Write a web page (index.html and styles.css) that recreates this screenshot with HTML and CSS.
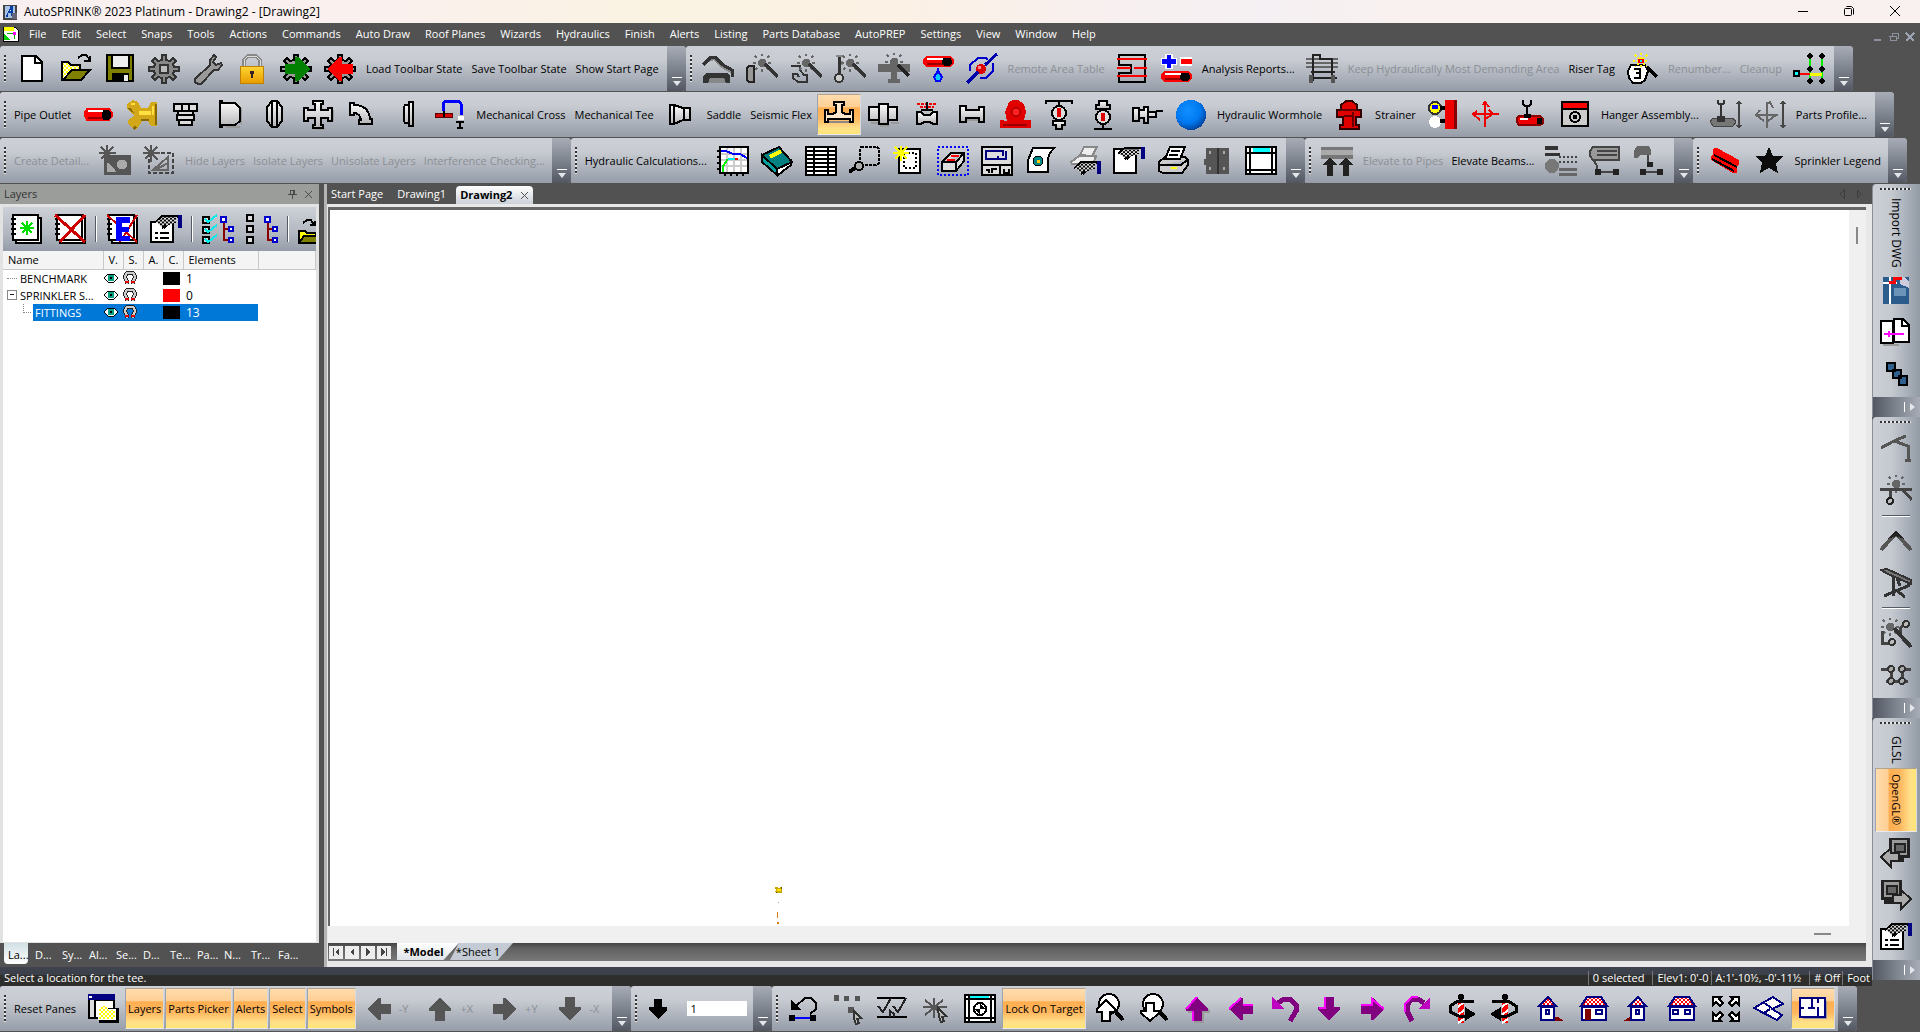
FILE: index.html
```html
<!DOCTYPE html>
<html lang="en">
<head>
<meta charset="utf-8">
<title>AutoSPRINK® 2023 Platinum - Drawing2 - [Drawing2]</title>
<link rel="stylesheet" href="styles.css">
</head>
<body>
<svg class="defs" aria-hidden="true">
<defs>
<pattern id="dither" width="4" height="4" patternUnits="userSpaceOnUse"><path fill="#fff" d="M0 0h4v4H0z"/><path fill="#ff0" d="M0 0h2v2H0zM2 2h2v2H2z"/></pattern>
<pattern id="tiles" width="4" height="4" patternUnits="userSpaceOnUse"><path fill="#fff" d="M0 0h4v4H0z"/><path fill="#f00" d="M0 0h2v2H0zM2 2h2v2H2z"/></pattern>
<pattern id="check" width="4" height="4" patternUnits="userSpaceOnUse"><path fill="#ddd" d="M0 0h4v4H0z"/><path fill="#000" d="M0 0h2v2H0zM2 2h2v2H2z"/></pattern>
<linearGradient id="steel" x2="0" y2="1"><stop stop-color="#fff"/><stop offset="1" stop-color="#b4b4b8"/></linearGradient>
<linearGradient id="gold" x2="0" y2="1"><stop stop-color="#ffd633"/><stop offset="1" stop-color="#e89c00"/></linearGradient>
<radialGradient id="ball" cx=".4" cy=".35" r=".7"><stop stop-color="#1090ff"/><stop offset=".6" stop-color="#0078f0"/><stop offset="1" stop-color="#003c90"/></radialGradient>
<symbol id="gearshape" viewBox="0 0 32 32"><path stroke-width="2" d="M14 2h4v5l4 1 3-3 3 3-3 3 1 3h5v4h-5l-1 3 3 3-3 3-3-3-4 1v5h-4v-5l-4-1-3 3-3-3 3-3-1-3H1v-4h5l1-3-3-3 3-3 3 3 4-1z"/></symbol>
<symbol id="pipe" viewBox="0 0 32 14" preserveAspectRatio="none"><path fill="#f00" d="M4 1h24l4 4v4l-4 4H4L1 9V5z"/><path fill="#fff" d="M5 3h16v2H5z"/><path fill="#900" d="M5 9h18v2H5z"/><path d="M22 3h6l2 3v3l-2 3h-6l-2-3V6z"/></symbol>
<symbol id="spark" viewBox="0 0 18 18"><path fill="#666" d="M7 5h4l2 2v4l-2 2H7l-2-2V7z"/><path stroke="#666" stroke-width="2" d="M9 0v2M9 15v3M0 9h3M15 9h3M2 2l2 2M16 2l-2 2M2 16l2-2M16 16l-2-2"/></symbol>
<symbol id="arrow" viewBox="0 0 32 32"><path d="M16 4l11 12v2h-6v10H11V18H5v-2z"/></symbol>
<symbol id="hand" viewBox="0 0 28 16" preserveAspectRatio="none"><path fill="url(#check)" d="M1 8l7-6h14v7l-8 3-4 4-4-4z"/><path fill="none" stroke="#000" stroke-width="2" d="M1 9l7-7h15l2 2v6M8 15l4-3"/><path fill="#000080" d="M24 1h4v14h-4z"/></symbol>
<symbol id="eye" viewBox="0 0 16 10"><path fill="#fff" stroke="#000" d="M1 5l4-4h6l4 4-4 4H5z"/><path fill="#00a080" d="M5 2h6v6H5z"/><path fill="#000" d="M7 4h2v2H7z"/></symbol>
<symbol id="magnet" viewBox="0 0 14 14"><path fill="none" stroke="#222" stroke-width="4" d="M4 13v-3L2 7V5l2-3h6l2 3v2l-2 3v3"/><path fill="none" stroke="#ccc" stroke-width="2" d="M4 13v-3L2 7V5l2-3h6l2 3v2l-2 3v3"/><path fill="#d00" d="M2 10h4v2H2zM8 10h4v2H8z"/></symbol>
<symbol id="screen" viewBox="0 0 32 32"><path fill="#222" d="M9 1h21v20h-6v4H12V21H9z"/><path fill="#999" d="M12 3h15v15H12z"/><path fill="#222" d="M14 6h12v10H14z"/><path fill="#666" d="M16 8h8v6h-8z"/></symbol>
</defs>
</svg>

<header class="titlebar">
<svg class="appicon" viewBox="0 0 16 16"><path fill="#444" d="M0 1h15v15H0z"/><path fill="#a8c4e8" d="M2 2h11v12H2z"/><path fill="#0a3ca8" d="M3 13L8 2h3v10H8V9H6l-1 4z"/><path fill="#fff" d="M7 7l2-3v3z"/><path fill="#667" d="M10 9h5v6h-5z"/></svg>
<h1>AutoSPRINK® 2023 Platinum - Drawing2 - [Drawing2]</h1>
<div class="wincontrols">
<button aria-label="Minimize"><svg viewBox="0 0 12 12"><path stroke="#000" d="M1 6.500h10"/></svg></button>
<button aria-label="Restore"><svg viewBox="0 0 12 12"><rect x="1.500" y="3.500" width="7" height="7" rx="1" fill="none" stroke="#000"/><path fill="none" stroke="#000" d="M3.500 1.500h5l2 2v6"/></svg></button>
<button aria-label="Close"><svg viewBox="0 0 12 12"><path stroke="#000" d="M1 1l10 10M11 1L1 11"/></svg></button>
</div>
</header>

<nav class="menubar">
<svg class="docicon" viewBox="0 0 18 16"><path fill="#fff" stroke="#000" d="M1 1h12l3 3v11H1z"/><path fill="#ff0" d="M2 1h10v4H2z"/><path fill="#0c0" d="M2 7l6 7H2z"/><path fill="none" stroke="#0a0" d="M5 7.500h7v5"/><path fill="#f0f" d="M11 6h3v3h-3z"/></svg>
<button>File</button><button>Edit</button><button>Select</button><button>Snaps</button><button>Tools</button><button>Actions</button><button>Commands</button><button>Auto Draw</button><button>Roof Planes</button><button>Wizards</button><button>Hydraulics</button><button>Finish</button><button>Alerts</button><button>Listing</button><button>Parts Database</button><button>AutoPREP</button><button>Settings</button><button>View</button><button>Window</button><button>Help</button>
<div class="docctl">
<button aria-label="Minimize drawing"><svg viewBox="0 0 10 10"><path fill="#8d939e" d="M1 7h7v2H1z"/></svg></button>
<button aria-label="Restore drawing"><svg viewBox="0 0 10 10"><path fill="none" stroke="#8d939e" d="M1 4.500h6v4H1.500zM3 4V1.500h6V6H7"/></svg></button>
<button aria-label="Close drawing"><svg viewBox="0 0 10 10"><path stroke="#9ba3b2" stroke-width="2" d="M1 1l8 8M9 1L1 9"/></svg></button>
</div>
</nav>

<div class="rows">
<div class="row">
<div class="bar"><i class="grip"></i>
<button class="ib" aria-label="New"><svg viewBox="0 0 32 32"><path fill="#fff" stroke="#000" stroke-width="2" d="M6 3h14l6 6v19H6z"/><path fill="none" stroke="#000" stroke-width="2" d="M19 3v7h7"/></svg></button>
<button class="ib" aria-label="Open"><svg viewBox="0 0 32 32"><path fill="url(#dither)" stroke="#000" stroke-width="2" d="M2 27V9h6l3 3h9v6h-8L3 27z"/><path fill="#808000" stroke="#000" stroke-width="2" d="M3 27l9-10h18l-9 10z"/><path fill="none" stroke="#000" stroke-width="2" d="M18 5l4-3h4l4 5M24 8h6V3"/></svg></button>
<button class="ib" aria-label="Save"><svg viewBox="0 0 32 32"><path fill="#808000" stroke="#000" stroke-width="2" d="M3 2h26v26H3z"/><path fill="#eee" stroke="#000" stroke-width="2" d="M8 2h17v13H8z"/><path d="M8 20h17v9H8z"/><path fill="#eee" d="M20 22h4v6h-4z"/></svg></button>
<button class="ib" aria-label="Options"><svg viewBox="0 0 32 32"><use href="#gearshape" fill="#888" stroke="#333"/><path fill="#bbb" stroke="#333" stroke-width="2" d="M12 12h8v8h-8z"/></svg></button>
<button class="ib" aria-label="Configure"><svg viewBox="0 0 32 32"><path fill="#999" stroke="#333" stroke-width="2" d="M22 2l-4 5v5L3 26v3l3 2h3l13-14h4l4-5-1-2-5 2-3-3 3-5z"/></svg></button>
<button class="ib" aria-label="Lock"><svg viewBox="0 0 32 32"><path fill="none" stroke="#888" stroke-width="4" d="M8 14V7l4-4h8l4 4v7"/><path fill="none" stroke="#ddd" stroke-width="1" d="M8 14V7l4-4h8l4 4v7"/><path fill="url(#gold)" stroke="#c08000" d="M4.500 13.500h23v17h-23z"/><path fill="#322" d="M14 18h4v3h-1v4h-2v-4h-1z"/></svg></button>
<button class="ib" aria-label="Load state"><svg viewBox="0 0 32 32"><use href="#gearshape" fill="#999" stroke="#000"/><path fill="#008000" d="M5 11h10V4h3l12 12-12 12h-3v-7H5z"/></svg></button>
<button class="ib" aria-label="Reset state"><svg viewBox="0 0 32 32"><use href="#gearshape" fill="#999" stroke="#000"/><path fill="#f00" d="M29 11H18V4h-3L3 16l12 12h3v-7h11z"/></svg></button>
<button class="tb">Load Toolbar State</button><button class="tb">Save Toolbar State</button><button class="tb">Show Start Page</button>
<button class="more" aria-label="Toolbar options"></button></div>
<div class="bar"><i class="grip"></i>
<button class="ib" aria-label="Draw pipes"><svg viewBox="0 0 32 32"><path fill="none" stroke="#888" stroke-width="2" d="M3 9l9-3 8 8 9 5"/><path fill="none" stroke="#333" stroke-width="3" d="M1 12l8-8h4l8 8 9 5v7"/><path fill="#333" d="M4 20h22l2 3v7H1v-7z"/><path fill="#888" d="M8 25h14l2 5H6z"/></svg></button>
<button class="ib" aria-label="Head wand"><svg viewBox="0 0 32 32"><path fill="#999" stroke="#222" stroke-width="2" d="M3 13h5v16H3l-2-2V15z"/><use href="#spark" x="7" y="1" width="18" height="18"/><path stroke="#333" stroke-width="3" d="M19 11l13 13"/></svg></button>
<button class="ib" aria-label="Elbow wand"><svg viewBox="0 0 32 32"><path fill="none" stroke="#333" stroke-width="2" d="M1 13h9v4l4 5h3v7H8l-5-4v-4h4l2 3"/><use href="#spark" x="7" y="1" width="18" height="18"/><path stroke="#333" stroke-width="3" d="M19 11l13 13"/></svg></button>
<button class="ib" aria-label="Drop wand"><svg viewBox="0 0 32 32"><path stroke="#333" stroke-width="3" d="M5 4v18"/><path stroke="#888" stroke-width="2" d="M2 3h7M8 8v4"/><circle cx="5" cy="25" r="4" fill="#ccc" stroke="#333" stroke-width="2"/><use href="#spark" x="7" y="1" width="18" height="18"/><path stroke="#333" stroke-width="3" d="M19 11l13 13"/></svg></button>
<button class="ib" aria-label="Tee wand"><svg viewBox="0 0 32 32"><path fill="#666" d="M0 11h32v8H19v7h3v4H10v-4h3v-7H0z"/><use href="#spark" x="7" y="0" width="18" height="18"/><path stroke="#222" stroke-width="3" d="M20 12l11 11"/></svg></button>
<button class="ib" aria-label="Flow"><svg viewBox="0 0 32 32"><use href="#pipe" x="0" y="2" width="32" height="13"/><path stroke="#00f" stroke-width="2" d="M16 15v8"/><path fill="#0cf" stroke="#00f" stroke-width="2" d="M16 18l4 6-2 4h-4l-2-4z"/></svg></button>
<button class="ib" aria-label="No flow"><svg viewBox="0 0 32 32"><path fill="none" stroke="#00c" stroke-width="2" d="M4 18V12l8-7h8l2 2M27 10v8l-7 7h-6"/><circle cx="15" cy="16" r="5" fill="#d00"/><path fill="#f88" d="M12 13h3v3h-3z"/><path stroke="#00a" stroke-width="3" d="M1 30l11-11M19 12L31 1"/></svg></button>
<button class="tb" disabled>Remote Area Table</button>
<button class="ib" aria-label="Remote area"><svg viewBox="0 0 32 32"><path fill="none" stroke="#000" stroke-width="2" d="M3 2h26v27H3v-9h12v-8H3z"/><path stroke="#f00" stroke-width="2" d="M1 6h30M1 15h14M18 15h13M1 23h30"/></svg></button>
<button class="ib" aria-label="Add or remove pipe"><svg viewBox="0 0 32 32"><path fill="#fff" d="M5 1h8v4h4v7h-4v4H5v-4H1V5h4zM20 4h12v9H20z"/><path fill="#00f" d="M7 2h4v4h5v5h-5v4H7v-4H2V6h5z"/><path fill="#f00" d="M21 6h11v5H21z"/><use href="#pipe" x="0" y="17" width="32" height="13"/></svg></button>
<button class="tb">Analysis Reports...</button>
<button class="ib" aria-label="Demand area"><svg viewBox="0 0 32 32"><path stroke="#666" stroke-width="2" d="M0 6h32M0 10h32M0 14h32"/><path fill="none" stroke="#222" stroke-width="2" d="M7 28V2h7v4h12v22M5 19h24M3 25h28"/><path fill="#555" d="M3 22h4v8H3zM25 22h4v8h-4z"/></svg></button>
<button class="tb" disabled>Keep Hydraulically Most Demanding Area</button><button class="tb">Riser Tag</button>
<button class="ib" aria-label="Renumber tags"><svg viewBox="0 0 32 32"><path fill="#fff" stroke="#000" stroke-width="2" d="M5 12h14l3 6-3 9-4 3H7l-4-5-1-7z"/><path fill="none" stroke="#000" stroke-width="2" d="M8 16h6v4h-4M14 20v5H8"/><path stroke="#ff0" stroke-width="2" stroke-dasharray="2 2" d="M15 0v15M7 8h16M9 2l12 12M21 2L9 14"/><path fill="#f00" d="M12 6h6v4h-6z"/><path fill="#0ee" d="M14 7h2v2h-2z"/><path stroke="#000" stroke-width="3" d="M21 14l10 10"/></svg></button>
<button class="tb" disabled>Renumber...</button><button class="tb" disabled>Cleanup</button>
<button class="ib" aria-label="Node tree"><svg viewBox="0 0 32 32"><path stroke="#0e0" stroke-width="2" d="M17 4v22M29 4v22"/><path stroke="#f00" stroke-width="2" d="M5 21h12"/><path stroke="#ff0" stroke-width="3" d="M17 21h12"/><path fill="#0ff" stroke="#000" stroke-width="2" d="M1 18h5v5H1z"/><path fill="#fff" stroke="#000" stroke-width="2" d="M17 1l2 2-2 2-2-2zM29 1l2 2-2 2-2-2zM17 14l2 2-2 2-2-2zM29 14l2 2-2 2-2-2zM17 26l2 2-2 2-2-2zM29 26l2 2-2 2-2-2z"/></svg></button>
<button class="more" aria-label="Toolbar options"></button></div>
</div>

<div class="row">
<div class="bar"><i class="grip"></i>
<button class="tb">Pipe Outlet</button>
<button class="ib" aria-label="Pipe"><svg viewBox="0 0 32 32"><use href="#pipe" x="1" y="8" width="30" height="15"/></svg></button>
<button class="ib" aria-label="Fitting"><svg viewBox="0 0 32 32"><path fill="#d2a818" d="M1 5l6-4 5 2 3 6h7l3-6h6v24h-6l-3-5h-6l-4 7-4 2-6-6v-4l6-4-3-3-4-5z"/><path fill="#ffe040" d="M13 12h12v4H13zM5 4h4v2H5zM26 7h2v9h-2z"/><path fill="#8a6a00" d="M15 20h8v2h-8zM9 26l2 3-3 2-2-2zM2 9h3l3 5-4-2zM29 5h2v21h-2z"/></svg></button>
<button class="ib" aria-label="Sprinkler"><svg viewBox="0 0 32 32"><path fill="#ddd" stroke="#000" stroke-width="2" d="M4 5h23v7H4zM8 12h15v4H8zM7 16h17v5H7zM9 21h13v5H9z"/><path stroke="#000" stroke-width="2" d="M12 5v7M19 5v7"/></svg></button>
<button class="ib" aria-label="Cap"><svg viewBox="0 0 32 32"><path fill="#999" d="M12 27h14v2H12zM26 9h2v16h-2z"/><path fill="url(#steel)" stroke="#000" stroke-width="2" d="M6 2h2v2h13l5 5v13l-5 4H8v2H6z"/></svg></button>
<button class="ib" aria-label="Coupling"><svg viewBox="0 0 32 32"><path fill="url(#steel)" stroke="#000" stroke-width="2" d="M14 2h5l5 6v14l-5 6h-5L9 22V8z"/><path fill="none" stroke="#000" stroke-width="2" d="M14 3v24M19 3v24"/></svg></button>
<button class="ib" aria-label="Cross"><svg viewBox="0 0 32 32"><path fill="#999" d="M13 29h10v2H13zM30 11h2v11h-2z"/><path fill="url(#steel)" stroke="#000" stroke-width="2" d="M11 2h10v3h-2v6h7V9h4v13h-4v-3h-7v7h2v3H11v-3h2v-7H6v3H2V9h4v2h7V5h-2z"/></svg></button>
<button class="ib" aria-label="Elbow"><svg viewBox="0 0 32 32"><path fill="url(#steel)" stroke="#000" stroke-width="2" d="M4 4h4v2c10 0 15 5 16 14h2v5H13v-4h2c-1-5-3-7-7-7v2H4z"/></svg></button>
<button class="ib" aria-label="Flange"><svg viewBox="0 0 32 32"><path fill="url(#steel)" stroke="#000" stroke-width="2" d="M15 6h4V3h4v24h-4v-3h-4l-1-2V8zM19 4v22"/></svg></button>
<button class="ib" aria-label="Armover"><svg viewBox="0 0 32 32"><path fill="none" stroke="#00f" stroke-width="3" d="M9 12V5l2-3h14l2 3v11"/><path fill="#d00" stroke="#500" d="M1 14h17v4H1z"/><path stroke="#000" stroke-width="2" d="M10 12v6M22 23h8M26 23v6M23 29h6"/><path fill="#fff" d="M24 17h6v4h-6z"/></svg></button>
<button class="tb">Mechanical Cross</button><button class="tb">Mechanical Tee</button>
<button class="ib" aria-label="Reducer"><svg viewBox="0 0 32 32"><path fill="url(#steel)" stroke="#000" stroke-width="2" d="M5 6h4l9 3h7v12h-7l-9 4H5zM9 6v19M19 9v12"/></svg></button>
<button class="tb">Saddle</button><button class="tb">Seismic Flex</button>
<button class="ib on" aria-label="Tee"><svg viewBox="0 0 32 32"><path fill="#888" d="M6 22h20v2H6z"/><path fill="#ffe8cc" stroke="#000" stroke-width="2" d="M11 3h10v3h-2v7l3 2h5v-4h3v12h-3v-3H5v3H2V11h3v4h5l3-2V6h-2z"/></svg></button>
<button class="ib" aria-label="Grooved coupling"><svg viewBox="0 0 32 32"><path fill="#999" d="M4 23h9v2H4zM24 23h8v2h-8zM13 26h9v2h-9z"/><path fill="url(#steel)" stroke="#000" stroke-width="2" d="M2 8h10V5h9v3h9v13h-9v4h-9v-4H2zM12 8v13M21 8v13"/></svg></button>
<button class="ib" aria-label="Spray tee"><svg viewBox="0 0 32 32"><path stroke="#e00" stroke-width="2" stroke-dasharray="3 1" d="M6 5h20M9 8h14"/><path stroke="#000" stroke-width="2" d="M16 3v9M10 11h12"/><path fill="url(#steel)" stroke="#000" stroke-width="2" d="M6 13h4l3 3h6l3-3h4v12h-4l-3-2h-6l-3 2H6z"/></svg></button>
<button class="ib" aria-label="Spool"><svg viewBox="0 0 32 32"><path fill="#999" d="M10 20h15v2H10z"/><path fill="url(#steel)" stroke="#000" stroke-width="2" d="M5 7h6v4h13V8h5v15h-5v-4H11v4H5z"/></svg></button>
<button class="ib" aria-label="Alarm valve"><svg viewBox="0 0 32 32"><path fill="#e00000" d="M10 3l4-2h5l6 4 2 8-2 8h7v8H1v-8l7 1-2-9z"/><circle cx="17" cy="13" r="4" fill="#f22" stroke="#b00" stroke-width="2"/><path stroke="#900" stroke-width="2" d="M4 26h24"/></svg></button>
<button class="ib" aria-label="Upright valve"><svg viewBox="0 0 32 32"><path fill="none" stroke="#000" stroke-width="2" d="M3 5V2h26v3M16 2v5"/><circle cx="16" cy="14" r="7" fill="#ddd" stroke="#000" stroke-width="2"/><path fill="#d00" d="M14 9h4v9h-4z"/><path fill="url(#steel)" stroke="#000" stroke-width="2" d="M10 22h12v4h-3v4h-6v-4h-3z"/></svg></button>
<button class="ib" aria-label="Pendent valve"><svg viewBox="0 0 32 32"><circle cx="16" cy="18" r="7" fill="#ddd" stroke="#000" stroke-width="2"/><path fill="#d00" d="M14 14h4v8h-4z"/><path fill="url(#steel)" stroke="#000" stroke-width="2" d="M12 2h8v4h3v4H9V6h3z"/><path stroke="#000" stroke-width="2" d="M16 25v4M7 30h18"/></svg></button>
<button class="ib" aria-label="Sidewall"><svg viewBox="0 0 32 32"><path fill="url(#steel)" stroke="#000" stroke-width="2" d="M2 9h6v13H2zM8 11h5V8h4v16h-4v-5H8zM17 13h8v5h-8z"/><path stroke="#000" stroke-width="2" d="M25 12h7"/></svg></button>
<button class="ib" aria-label="Hydraulic node"><svg viewBox="0 0 32 32"><circle cx="16" cy="16" r="15" fill="url(#ball)"/></svg></button>
<button class="tb">Hydraulic Wormhole</button>
<button class="ib" aria-label="Hydrant"><svg viewBox="0 0 32 32"><path fill="#e00000" stroke="#300" stroke-width="2" d="M8 6l5-4h6l5 4v5h4v7h-5v8h3v4H7v-4h3v-8H4v-7h4z"/><path stroke="#600" stroke-width="2" d="M8 11h16M20 13v15M11 17h10"/></svg></button>
<button class="tb">Strainer</button>
<button class="ib" aria-label="Wall light"><svg viewBox="0 0 32 32"><path fill="#ee0000" d="M18 1h9v29h-9z"/><path fill="#800" d="M27 1h3v29h-3z"/><circle cx="8" cy="9" r="6" fill="#ff0" stroke="#333" stroke-width="2"/><path fill="#00f" d="M5 6h6v4H5z"/><circle cx="8" cy="23" r="6" fill="#fff"/><path d="M13 7h5v4h-5zM13 20h5v4h-5z"/></svg></button>
<button class="ib" aria-label="Move"><svg viewBox="0 0 32 32"><path fill="none" stroke="#e00" stroke-width="2" d="M14 3v25M2 15h26M9 21l-7-6 4-3M12 6l2-3 4 5M14 20l8-5-4-4"/></svg></button>
<button class="ib" aria-label="Hanger"><svg viewBox="0 0 32 32"><path fill="none" stroke="#000" stroke-width="2" d="M8 1v4l2 2h4l2-2V1M12 7v12"/><path fill="#e00" stroke="#800" stroke-width="2" d="M4 17h21l3 3v4l-3 2H4l-2-3v-4z"/><path fill="#fff" d="M5 19h8v2H5z"/><path d="M9 15h7v4H9zM22 19h5v6h-5z"/></svg></button>
<button class="ib" aria-label="Hanger properties"><svg viewBox="0 0 32 32"><path fill="#ccc" stroke="#000" stroke-width="2" d="M3 3h26v24H3z"/><path fill="#f00" d="M4 4h24v5H4z"/><path stroke="#000" stroke-width="2" d="M3 10h26"/><circle cx="16" cy="18" r="5" fill="none" stroke="#000" stroke-width="2"/><path d="M14 16h4v4h-4z"/></svg></button>
<button class="tb">Hanger Assembly...</button>
<button class="ib" aria-label="Hanger elevation"><svg viewBox="0 0 32 32"><path fill="none" stroke="#333" stroke-width="2" d="M8 1v3l3 2 3-2V1M11 6v14"/><path stroke="#444" stroke-width="2" d="M29 2v27"/><path fill="#444" d="M29 1l3 4h-6zM29 30l3-4h-6z"/><path fill="#777" stroke="#444" d="M3 19h20l3 4-3 4H3l-3-4z"/><path fill="#333" d="M7 17h8v6H7z"/></svg></button>
<button class="ib" aria-label="Brace elevation"><svg viewBox="0 0 32 32"><path fill="none" stroke="#666" stroke-width="2" d="M13 3v26M1 16h23M6 11l-4 5 8 6M12 6l4-3 3 6M14 22l8-6"/><path stroke="#444" stroke-width="2" d="M29 2v27"/><path fill="#444" d="M29 1l3 4h-6zM29 30l3-4h-6z"/></svg></button>
<button class="tb">Parts Profile...</button>
<button class="more" aria-label="Toolbar options"></button></div>
</div>

<div class="row tight">
<div class="bar"><i class="grip"></i>
<button class="tb" disabled>Create Detail...</button>
<button class="ib" aria-label="New detail" disabled><svg viewBox="0 0 32 32"><path fill="#555" d="M5 10h27v20H5z"/><path fill="#aaa" d="M8 27V17l7 6 2 4zM20 15h6l2 3v3l-2 3h-6l-2-3v-3z"/><path stroke="#555" stroke-width="2" d="M8 0v18M0 8h17M2 2l13 13M14 2L2 14"/></svg></button>
<button class="ib" aria-label="New boundary" disabled><svg viewBox="0 0 32 32"><path fill="none" stroke="#444" stroke-width="2" stroke-dasharray="4 2" d="M6 8h24v20H6z"/><path fill="none" stroke="#666" stroke-width="2" d="M10 25l15-13v13z"/><path fill="none" stroke="#666" stroke-width="2" d="M12 25l13-7"/><path stroke="#555" stroke-width="2" d="M8 0v17M0 8h17M2 2l13 13M14 2L2 14"/></svg></button>
<button class="tb" disabled>Hide Layers</button><button class="tb" disabled>Isolate Layers</button><button class="tb" disabled>Unisolate Layers</button><button class="tb" disabled>Interference Checking...</button>
<button class="more" aria-label="Toolbar options"></button></div>
<div class="bar"><i class="grip"></i>
<button class="tb">Hydraulic Calculations...</button>
<button class="ib" aria-label="Graph"><svg viewBox="0 0 32 32"><path stroke="#000" stroke-width="2" d="M0 6h3M0 12h3M0 18h3M0 24h3M8 28v3M14 28v3M20 28v3M26 28v3"/><path fill="#fff" stroke="#000" stroke-width="2" d="M3 2h28v26H3z"/><path stroke="#ccc" stroke-width="2" d="M10 3v24M17 3v24M24 3v24M4 9h26M4 15h26M4 21h26"/><path fill="none" stroke="#00f" stroke-width="2" d="M4 6h5l7 3h7l7 4"/><path fill="none" stroke="#0e0" stroke-width="2" d="M6 27v-6l5-7"/><path stroke="#0ee" stroke-width="2" d="M11 14h7"/><path stroke="#f00" stroke-width="2" d="M18 14h3"/></svg></button>
<button class="ib" aria-label="Book"><svg viewBox="0 0 32 32"><path fill="#fff" stroke="#000" stroke-width="2" d="M15 23l15-8v5l-13 10z"/><path fill="#008080" stroke="#000" stroke-width="2" d="M1 10L18 2l13 15-15 7z"/><path fill="#00a0a0" stroke="#000" stroke-width="2" d="M1 10v7l15 13v-6z"/><path stroke="#ff0" stroke-width="4" d="M9 12l11-6"/></svg></button>
<button class="ib" aria-label="Grid"><svg viewBox="0 0 32 32"><path fill="#fff" stroke="#000" stroke-width="2" d="M1 2h30v28H1z"/><path stroke="#000" stroke-width="2" d="M9 2v28M23 2v28M1 6h30M1 10h30M1 14h30M1 18h30M1 22h30M1 26h30"/></svg></button>
<button class="ib" aria-label="Zoom region"><svg viewBox="0 0 32 32"><path fill="none" stroke="#000" stroke-width="2" stroke-dasharray="3 1" d="M12 2h16l2 2v14l-3 2H13l-2-3V4z"/><circle cx="10" cy="21" r="4" fill="#aaa" stroke="#000" stroke-width="2"/><path stroke="#000" stroke-width="4" d="M0 27l6-4"/></svg></button>
<button class="ib" aria-label="New sheet"><svg viewBox="0 0 32 32"><path fill="#fff" stroke="#000" stroke-width="2" d="M6 4h21v24H6z"/><path fill="none" stroke="#000" stroke-width="2" stroke-dasharray="2 2" d="M11 8h12v15H11z"/><path stroke="#ff0" stroke-width="2" d="M8 1v15M0 8h16M2 2l12 12M14 2L2 14"/></svg></button>
<button class="ib" aria-label="3D region"><svg viewBox="0 0 32 32"><path fill="none" stroke="#00f" stroke-width="2" stroke-dasharray="2 2" d="M1 2h30v28H1z"/><path fill="#ddd" stroke="#000" stroke-width="2" d="M5 17l9-9h13v8l-8 10H5zM5 17h14l8-9M19 17v9"/><path stroke="#f00" stroke-width="2" d="M14 11h8M10 15h8"/></svg></button>
<button class="ib" aria-label="Title block"><svg viewBox="0 0 32 32"><path fill="#ddd" stroke="#000" stroke-width="2" d="M1 2h30v28H1zM1 20h30M19 20v10"/><path fill="none" stroke="#000080" stroke-width="2" d="M25 6v8h-8v-3M17 14H5V6h17v5"/><path fill="none" stroke="#000" stroke-width="2" d="M5 25h3v3M11 28v-4h5M23 24v4h5v-4"/></svg></button>
<button class="ib" aria-label="Sheet preview"><svg viewBox="0 0 32 32"><path fill="#fff" stroke="#000" stroke-width="2" d="M8 3h21l-4 5-2 5v14H3V15z"/><circle cx="13" cy="16" r="5" fill="#088" stroke="#000"/><path fill="#fc0" d="M12 15h3v3h-3z"/></svg></button>
<button class="ib" aria-label="Print setup" disabled><svg viewBox="0 0 32 32"><path fill="#eee" stroke="#888" stroke-width="2" d="M11 10l4-8h13l-5 9zM2 17l8-6h17l-3 8H3z"/><use href="#hand" x="4" y="15" width="28" height="15"/></svg></button>
<button class="ib" aria-label="Page properties"><svg viewBox="0 0 32 32"><path fill="#fff" stroke="#000" stroke-width="2" d="M1 4h22v24H1z"/><use href="#hand" x="4" y="1" width="28" height="14"/></svg></button>
<button class="ib" aria-label="Print"><svg viewBox="0 0 32 32"><path fill="#ccc" stroke="#000" stroke-width="2" d="M2 17l6-5h20l3 3v5l-6 8H6l-4-2zM2 20h22l6-5"/><path fill="#fff" stroke="#000" stroke-width="2" d="M8 14l5-12h15l-5 12z"/><path stroke="#ff0" stroke-width="2" d="M14 23h6"/><path stroke="#000" stroke-width="2" d="M14 6h9M12 10h9"/></svg></button>
<button class="ib" aria-label="Mirror" disabled><svg viewBox="0 0 32 32"><path fill="#555" d="M5 3h23v26H5v-9H3v-6h2z"/><path stroke="#333" stroke-width="2" d="M17 3v26"/><path fill="#aaa" d="M8 6h2v3H8zM22 6h2v3h-2zM8 22h2v3H8zM22 22h2v3h-2z"/></svg></button>
<button class="ib" aria-label="Window"><svg viewBox="0 0 32 32"><path fill="#fff" stroke="#000" stroke-width="2" d="M1 2h30v27H1z"/><path stroke="#000" stroke-width="2" d="M1 8h30M1 25h30M5 2v27M27 2v27"/><path fill="#0ff" d="M8 3h17v4H8z"/></svg></button>
<button class="more" aria-label="Toolbar options"></button></div>
<div class="bar"><i class="grip"></i>
<button class="ib" aria-label="Elevate" disabled><svg viewBox="0 0 32 32"><path fill="#777" d="M0 2h32v12H0z"/><path fill="#aaa" d="M0 5h32v5H0z"/><path fill="#222" d="M9 12l7 8h-4v11H6V20H2zM25 12l7 8h-4v11h-6V20h-4z"/></svg></button>
<button class="tb" disabled>Elevate to Pipes</button><button class="tb">Elevate Beams...</button>
<button class="ib" aria-label="Beam list" disabled><svg viewBox="0 0 32 32"><path fill="#333" d="M0 1h13v4H0zM0 8h15v3H0z"/><path fill="#666" d="M14 23h18v3H14zM14 28h18v3H14z"/><circle cx="7" cy="21" r="7" fill="#777"/><path stroke="#444" stroke-width="2" stroke-dasharray="2 2" d="M14 12h18M14 17h18"/></svg></button>
<button class="ib" aria-label="Pipe distance" disabled><svg viewBox="0 0 32 32"><path fill="#999" stroke="#444" stroke-width="2" d="M4 2h26v13H4l-3-4V6zM8 6h20M8 10h20"/><path fill="none" stroke="#444" stroke-width="2" d="M4 14l4 7v6h20"/><path fill="#222" d="M6 24h6v6H6zM24 24h6v6h-6z"/></svg></button>
<button class="ib" aria-label="Head distance" disabled><svg viewBox="0 0 32 32"><path fill="#666" d="M4 1h12l2 4v5H8l-4 3H1V6z"/><path fill="none" stroke="#444" stroke-width="2" d="M15 10v8M12 27h16"/><path fill="#222" d="M14 17h6v5h-6zM7 24h6v6H7zM24 24h6v6h-6z"/></svg></button>
<button class="more" aria-label="Toolbar options"></button></div>
<div class="bar"><i class="grip"></i>
<button class="ib" aria-label="Beam"><svg viewBox="0 0 32 32"><path fill="#f00" d="M5 3h3l22 12v4l-2 3v6h-4L2 15v-4l2-2V5z"/><path fill="none" stroke="#000" stroke-width="2" d="M5 10l23 12M3 14l22 12"/></svg></button>
<button class="ib" aria-label="Star"><svg viewBox="0 0 32 32"><path fill="#0c0c0c" d="M16 2l4 9h10l-7 7 2 10-9-5-9 5 2-10-7-7h10z"/></svg></button>
<button class="tb">Sprinkler Legend</button>
<button class="more" aria-label="Toolbar options"></button></div>
</div>
</div>

<div class="middle">
<div class="left">
<div class="work">
<aside class="panel">
<h2>Layers<span><svg viewBox="0 0 10 12"><path fill="none" stroke="#444" d="M2.500 1.500h5v5h-5zM6.500 1.500v5M0 6.500h10M5 7v4"/></svg><svg viewBox="0 0 10 12"><path stroke="#444" d="M1 2l8 8M9 2l-8 8"/></svg></span></h2>
<div class="pbody">
<div class="ltools">
<button class="ib" aria-label="New layer"><svg viewBox="0 0 32 32"><path fill="#fff" stroke="#000" stroke-width="2" d="M6 5h25v25H6z"/><path fill="#fff" stroke="#000" stroke-width="2" d="M3 2h25v25H3z"/><path stroke="#000" stroke-width="2" d="M1 6h5M1 11h5M1 16h5M1 21h5"/><path stroke="#0d0" stroke-width="2" d="M17 8v14M10 15h14M12 10l10 10M22 10L12 20"/></svg></button>
<button class="ib" aria-label="Delete layer"><svg viewBox="0 0 32 32"><path fill="#fff" stroke="#000" stroke-width="2" d="M6 5h25v25H6z"/><path fill="#fff" stroke="#000" stroke-width="2" d="M3 2h25v25H3z"/><path stroke="#000" stroke-width="2" d="M1 6h5M1 11h5M1 16h5M1 21h5"/><path stroke="#c00" stroke-width="3" d="M1 2l30 27M31 2L6 29"/></svg></button>
<i class="sep"></i>
<button class="ib" aria-label="Delete empty layers"><svg viewBox="0 0 32 32"><path fill="#fff" stroke="#000" stroke-width="2" d="M6 5h25v25H6z"/><path fill="#fff" stroke="#000" stroke-width="2" d="M3 2h25v25H3z"/><path stroke="#000" stroke-width="2" d="M1 6h5M1 11h5M1 16h5M1 21h5"/><path stroke="#c00" stroke-width="2" d="M1 2l30 27M31 2L14 29"/><path fill="#00f" d="M10 4h14v6h-8v4h7v5h-7v4h8v5H10z"/></svg></button>
<button class="ib" aria-label="Layer properties"><svg viewBox="0 0 32 32"><path fill="#fff" stroke="#000" stroke-width="2" d="M1 9h22v20H1z"/><path stroke="#000" stroke-width="2" d="M5 20h3M10 20h9M5 25h3M10 25h9"/><use href="#hand" x="4" y="1" width="28" height="15"/></svg></button>
<i class="sep"></i>
<button class="ib" aria-label="Check all"><svg viewBox="0 0 32 32"><path fill="#ddd" stroke="#000" stroke-width="2" d="M1 4h6v6H1zM1 14h6v6H1zM1 24h6v6H1z"/><path fill="none" stroke="#0ee" stroke-width="2" d="M3 6l3 3 9-7M3 16l3 3 9-7M3 26l3 3 9-7"/><path fill="none" stroke="#800" stroke-width="2" d="M22 8v19h6M22 16h6"/><path fill="#fff" stroke="#00c" stroke-width="2" d="M19 4h5v5h-5zM27 14h4v4h-4zM27 25h4v4h-4z"/></svg></button>
<button class="ib" aria-label="Uncheck all"><svg viewBox="0 0 32 32"><path fill="#ddd" stroke="#000" stroke-width="2" d="M1 2h6v6H1zM1 13h6v6H1zM1 24h6v6H1z"/><path fill="none" stroke="#800" stroke-width="2" d="M22 8v19h6M22 16h6"/><path fill="#fff" stroke="#00c" stroke-width="2" d="M19 4h5v5h-5zM27 14h4v4h-4zM27 25h4v4h-4z"/></svg></button>
<i class="sep"></i>
<button class="ib" aria-label="Load layers"><svg viewBox="0 0 32 32"><path fill="none" stroke="#000" stroke-width="2" d="M5 10l4-3h4l3 5M12 12h5V8"/><path fill="#ff0" stroke="#000" stroke-width="2" d="M1 29V18h6l2 2h9v4H7z"/><path fill="#808000" stroke="#000" stroke-width="2" d="M1 30l5-7h20l-5 7z"/></svg></button>
</div>
<table>
<colgroup><col class="c1"><col class="c2"><col class="c3"><col class="c4"><col class="c4"><col class="c5"><col></colgroup>
<thead><tr><th>Name</th><th>V.</th><th>S.</th><th>A.</th><th>C.</th><th>Elements</th><th></th></tr></thead>
<tbody>
<tr><td><div class="node n1"><i class="dots"></i>BENCHMARK</div></td><td><svg class="eye"><use href="#eye"/></svg></td><td><svg class="mag"><use href="#magnet"/></svg></td><td></td><td><i class="sw"></i></td><td>1</td><td></td></tr>
<tr><td><div class="node n1"><i class="box"></i>SPRINKLER S...</div></td><td><svg class="eye"><use href="#eye"/></svg></td><td><svg class="mag"><use href="#magnet"/></svg></td><td></td><td><i class="sw red"></i></td><td>0</td><td></td></tr>
<tr class="sel"><td><div class="node n2"><i class="branch"></i><span>FITTINGS</span></div></td><td><svg class="eye"><use href="#eye"/></svg></td><td><svg class="mag"><use href="#magnet"/></svg></td><td></td><td><i class="sw"></i></td><td>13</td><td></td></tr>
</tbody>
</table>
</div>
<div class="ptabs"><button class="cur">La...</button><button>D...</button><button>Sy...</button><button>Al...</button><button>Se...</button><button>D...</button><button>Te...</button><button>Pa...</button><button>N...</button><button>Tr...</button><button>Fa...</button></div>
</aside>
<main class="doc">
<div class="dtabs"><button>Start Page</button><button>Drawing1</button><button class="cur">Drawing2 <svg viewBox="0 0 9 9"><path stroke="#555" d="M1 1l7 7M8 1L1 8"/></svg></button>
<div class="scrolls"><svg viewBox="0 0 24 10"><path fill="none" stroke="#3c3c3c" d="M5 1L1 5l4 4zM18 1l4 4-4 4z"/></svg></div></div>
<div class="frame">
<div class="view">
<div class="canvas"><svg class="drawing" viewBox="0 0 8 40"><path fill="#c9a800" d="M0 1h2l1 1h2V1h2v6H1L0 5l1-1-1-1z"/><path fill="#ffe100" d="M2 3h4v2H2z"/><path fill="#6a5000" d="M1 6h1v1H1zM6 1h1v2H6z"/><path fill="#aaa" d="M3 16h1v1H3z"/><path fill="#d87a10" d="M2 26h1v6H2zM2 36h2v2H2z"/></svg></div>
<div class="vscroll"><i></i></div>
</div>
<div class="hscroll"><i></i></div>
<div class="sheets">
<button class="nav" aria-label="First sheet"><svg viewBox="0 0 10 10"><path fill="#444" d="M2 1h1v8H2zM8 1v8L4 5z"/></svg></button>
<button class="nav" aria-label="Previous sheet"><svg viewBox="0 0 10 10"><path fill="#444" d="M7 1v8L3 5z"/></svg></button>
<button class="nav" aria-label="Next sheet"><svg viewBox="0 0 10 10"><path fill="#444" d="M3 1v8l4-4z"/></svg></button>
<button class="nav" aria-label="Last sheet"><svg viewBox="0 0 10 10"><path fill="#444" d="M7 1h1v8H7zM2 1v8l4-4z"/></svg></button>
<button class="sheet cur">*Model</button><button class="sheet">*Sheet 1</button>
</div>
</div>
</main>
</div>
<div class="status"><p>Select a location for the tee.</p><span>0 selected</span><span class="far">Elev1: 0'-0</span><span>A:1'-10½, -0'-11½</span><span class="far"># Off</span><span>Foot</span></div>
</div>
<div class="side">
<div class="vbar"><i class="vgrip"></i>
<button class="vt dwg">Import DWG</button>
<button class="vi" aria-label="Import map"><svg viewBox="0 0 32 32"><path fill="#2c5c8c" d="M3 3h26v27H3z"/><path fill="#6c93b8" d="M14 14h12v8H14z"/><path fill="#ccd" d="M20 3h4l5 5v6l-9-4z"/><path stroke="#fff" stroke-width="2" d="M3 9h14M10 3v27"/><path fill="none" stroke="#f00" stroke-width="3" d="M9 8h5V4h8"/></svg></button>
<button class="vi" aria-label="Import sheet"><svg viewBox="0 0 32 32"><path fill="#999" d="M3 28h16v2H3z"/><path fill="#fff" stroke="#000" stroke-width="2" d="M1 5h12v22H1z"/><path fill="#fff" stroke="#000" stroke-width="2" d="M14 3h9l6 6v17H14z"/><path fill="none" stroke="#000" stroke-width="2" d="M22 3v7h7"/><path stroke="#f0f" stroke-width="2" d="M4 18h20M9 15v6"/></svg></button>
<button class="vi" aria-label="Blocks"><svg viewBox="0 0 32 32"><path fill="#30608f" stroke="#000" stroke-width="2" d="M7 5h8v8H7zM13 12h8v8h-8zM19 18h8v9h-8z"/></svg></button>
<button class="vmore" aria-label="Toolbar options"></button></div>
<div class="vbar"><i class="vgrip near"></i>
<button class="vi" aria-label="Arm pipe" disabled><svg viewBox="0 0 32 32"><path fill="none" stroke="#555" stroke-width="3" d="M1 15l13-7 12-5M14 8l14 5v16M25 27h6"/></svg></button>
<button class="vi" aria-label="Sprinkler wand" disabled><svg viewBox="0 0 32 32"><use href="#spark" x="7" y="0" width="18" height="18"/><path fill="none" stroke="#444" stroke-width="3" d="M0 14h32M10 14v12M23 15l9 10"/><circle cx="10" cy="26" r="3" fill="#bbb" stroke="#222" stroke-width="2"/></svg></button>
<i class="vsep"></i>
<button class="vi" aria-label="Ridge" disabled><svg viewBox="0 0 32 32"><path fill="none" stroke="#555" stroke-width="4" d="M1 25L16 8l15 17"/><path fill="#222" d="M16 5l8 9-8-3-8 3z"/></svg></button>
<button class="vi" aria-label="Slope" disabled><svg viewBox="0 0 32 32"><path fill="#777" stroke="#333" stroke-width="2" d="M1 3l6-1 24 11v4L8 7z"/><path fill="none" stroke="#333" stroke-width="3" d="M13 9v20M17 11l3 8M4 29l26-11M16 23l9 7"/></svg></button>
<i class="vsep"></i>
<button class="vi" aria-label="Node wand" disabled><svg viewBox="0 0 32 32"><use href="#spark" x="1" y="1" width="18" height="18"/><path fill="none" stroke="#444" stroke-width="3" d="M2 14v12h10M26 7l-6 4v6"/><path stroke="#333" stroke-width="4" d="M14 11l17 19"/><circle cx="12" cy="25" r="3" fill="#bbb" stroke="#333" stroke-width="2"/><circle cx="26" cy="7" r="3" fill="#bbb" stroke="#333" stroke-width="2"/></svg></button>
<button class="vi" aria-label="Node grid" disabled><svg viewBox="0 0 32 32"><path fill="none" stroke="#444" stroke-width="3" d="M1 10h10v12H6M31 10H22v12h6M11 22h11"/><circle cx="11" cy="10" r="3" fill="#aaa" stroke="#333" stroke-width="2"/><circle cx="22" cy="10" r="3" fill="#aaa" stroke="#333" stroke-width="2"/><circle cx="11" cy="22" r="3" fill="#aaa" stroke="#333" stroke-width="2"/><circle cx="22" cy="22" r="3" fill="#aaa" stroke="#333" stroke-width="2"/></svg></button>
<button class="vmore" aria-label="Toolbar options"></button></div>
<div class="vbar"><i class="vgrip"></i>
<button class="vt glsl">GLSL</button><button class="vt gl on">OpenGL®</button>
<button class="vi" aria-label="Previous view"><svg viewBox="0 0 32 32"><use href="#screen"/><path fill="#aaa" stroke="#222" stroke-width="2" d="M1 20l10-9v5h8v8h-8v6z"/></svg></button>
<button class="vi" aria-label="Next view"><svg viewBox="0 0 32 32"><use href="#screen" x="-8"/><path fill="#aaa" stroke="#222" stroke-width="2" d="M31 20l-10-9v5h-8v8h8v6z"/></svg></button>
<button class="vi" aria-label="View properties"><svg viewBox="0 0 32 32"><path fill="#fff" stroke="#000" stroke-width="2" d="M1 8h22v20H1z"/><path stroke="#000" stroke-width="2" d="M5 19h3M10 19h9M5 24h3M10 24h9"/><use href="#hand" x="4" y="1" width="28" height="15"/></svg></button>
<button class="vmore" aria-label="Toolbar options"></button></div>
</div>
</div>

<footer class="row">
<div class="bar"><i class="grip"></i>
<button class="tb">Reset Panes</button>
<button class="ib panes" aria-label="Panes"><svg viewBox="0 0 32 32"><path fill="#ddd" stroke="#000" stroke-width="2" d="M2 3h6v22H2z"/><path fill="#fff" stroke="#000" stroke-width="2" d="M8 7h19v18H8z"/><path fill="#000080" d="M1 1h27v6H1z"/><path fill="#fff" d="M2 3h3v2H2z"/><path d="M14 15h18v15H12v-5z"/><path fill="#fff" d="M11 14l4-3h4l2 5h8v11H11z"/><path fill="url(#dither)" d="M12 16l3-3h4l2 4h7v9H12z"/></svg></button>
<button class="tb on">Layers</button><button class="tb on">Parts Picker</button><button class="tb on">Alerts</button><button class="tb on">Select</button><button class="tb on">Symbols</button>
<button class="tb step" disabled><svg viewBox="0 0 32 32"><use href="#arrow" fill="#555" transform="rotate(-90 16 16)"/></svg>-Y</button>
<button class="tb step" disabled><svg viewBox="0 0 32 32"><use href="#arrow" fill="#555"/></svg>+X</button>
<button class="tb step" disabled><svg viewBox="0 0 32 32"><use href="#arrow" fill="#555" transform="rotate(90 16 16)"/></svg>+Y</button>
<button class="tb step" disabled><svg viewBox="0 0 32 32"><use href="#arrow" fill="#555" transform="rotate(180 16 16)"/></svg>-X</button>
<button class="more" aria-label="Toolbar options"></button></div>
<div class="bar"><i class="grip"></i>
<button class="ib slim" aria-label="Move down"><svg viewBox="0 0 32 32"><path d="M12 6h8v8h5v3l-9 9-9-9v-3h5z"/></svg></button>
<input class="qty" type="text" value="1" aria-label="Step">
<button class="more" aria-label="Toolbar options"></button></div>
<div class="bar"><i class="grip"></i>
<button class="ib" aria-label="Undo move"><svg viewBox="0 0 32 32"><path fill="none" stroke="#000" stroke-width="2" d="M8 13l9-8h6l5 5v6l-6 5"/><path d="M3 7l4 4 7 6H3zM1 22h6v6H1zM22 22h6v6h-6z"/><path stroke="#00f" stroke-width="2" d="M7 25h15"/></svg></button>
<button class="ib" aria-label="Pick" disabled><svg viewBox="0 0 32 32"><path fill="#555" d="M2 2h5v6H2zM12 3h5v5h-5zM23 3h5v5h-5zM16 14h6v6h-6z"/><path fill="#bbb" stroke="#333" stroke-width="2" d="M22 18l7 7-4 1 2 4-3 1-2-5z"/></svg></button>
<button class="ib" aria-label="Validate"><svg viewBox="0 0 32 32"><path stroke="#000" stroke-width="2" d="M1 5h28M1 24h30"/><path fill="none" stroke="#222" stroke-width="2" d="M2 13l5 6 8-14M17 13l5 6 8-14M14 24v-6l4 3v3"/></svg></button>
<button class="ib" aria-label="Burst select" disabled><svg viewBox="0 0 32 32"><path stroke="#555" stroke-width="2" d="M14 5v20M3 14h24M5 7l18 15M23 7L5 22"/><path fill="#bbb" stroke="#333" stroke-width="2" d="M18 15l8 8-4 1 2 4-3 1-2-5z"/></svg></button>
<button class="ib" aria-label="Target view"><svg viewBox="0 0 32 32"><path fill="#fff" stroke="#000" stroke-width="2" d="M1 2h30v27H1z"/><path fill="#0ff" d="M5 3h20v2H5z"/><path stroke="#000" stroke-width="2" d="M1 6h30M5 2v27M27 2v27M1 25h30"/><circle cx="16" cy="16" r="6" fill="#fff" stroke="#000" stroke-width="2"/><path d="M16 10l5 6h-5v6l-5-6h5z"/></svg></button>
<button class="tb on">Lock On Target</button>
<button class="ib" aria-label="Zoom in"><svg viewBox="0 0 32 32"><circle cx="16" cy="11" r="10" fill="#fff" stroke="#000" stroke-width="2"/><path stroke="#000" stroke-width="4" d="M22 18l8 9"/><path fill="#fff" stroke="#000" stroke-width="2" d="M13 7l9 9v3h-5v9H9v-9H4v-3z"/></svg></button>
<button class="ib" aria-label="Zoom out"><svg viewBox="0 0 32 32"><circle cx="16" cy="11" r="10" fill="#fff" stroke="#000" stroke-width="2"/><path stroke="#000" stroke-width="4" d="M22 18l8 9"/><path fill="#fff" stroke="#000" stroke-width="2" d="M9 10h8v8h5v2l-9 8-9-8v-2h5z"/></svg></button>
<button class="ib" aria-label="Pan up"><svg viewBox="0 0 32 32"><use href="#arrow" fill="#999" x="2" y="2"/><use href="#arrow" fill="#800080"/><path stroke="#f0f" stroke-width="2" d="M5 16L16 4M12 18v10"/></svg></button>
<button class="ib" aria-label="Pan left"><svg viewBox="0 0 32 32"><use href="#arrow" fill="#800080" transform="rotate(-90 16 16)"/><path stroke="#f0f" stroke-width="2" d="M4 16L16 5M18 12h10"/></svg></button>
<button class="ib" aria-label="Rotate left"><svg viewBox="0 0 32 32"><path fill="none" stroke="#800080" stroke-width="5" d="M9 10l6-4h6l6 6v6l-6 10"/><path fill="#c000c0" d="M3 4l12 12H3z"/></svg></button>
<button class="ib" aria-label="Pan down"><svg viewBox="0 0 32 32"><use href="#arrow" fill="#800080" transform="rotate(180 16 16)"/><path fill="none" stroke="#f0f" stroke-width="2" d="M12 4v11H6"/></svg></button>
<button class="ib" aria-label="Pan right"><svg viewBox="0 0 32 32"><use href="#arrow" fill="#800080" transform="rotate(90 16 16)"/><path fill="none" stroke="#f0f" stroke-width="2" d="M4 12h11V6l12 10"/></svg></button>
<button class="ib" aria-label="Rotate right"><svg viewBox="0 0 32 32"><path fill="none" stroke="#800080" stroke-width="5" d="M23 10l-6-4h-6l-5 6v6l5 10"/><path fill="none" stroke="#f0f" stroke-width="2" d="M17 4h-6l-7 7v8"/><path fill="#c000c0" d="M29 4L17 16h12z"/></svg></button>
<button class="ib" aria-label="Orbit left"><svg viewBox="0 0 32 32"><path stroke="#f00" stroke-width="6" d="M16 7v23"/><path stroke="#fff" stroke-width="2" d="M13 14l6-5M13 22l6-5M13 30l6-4"/><circle cx="16" cy="4" r="3"/><path fill="none" stroke="#000" stroke-width="3" d="M29 8H13L5 13v6l9 4h8"/><path d="M20 14l11 7-11 7z"/></svg></button>
<button class="ib" aria-label="Orbit right"><svg viewBox="0 0 32 32"><path stroke="#f00" stroke-width="6" d="M16 7v23"/><path stroke="#fff" stroke-width="2" d="M13 14l6-5M13 22l6-5M13 30l6-4"/><circle cx="16" cy="4" r="3"/><path fill="none" stroke="#000" stroke-width="3" d="M3 8h16l8 5v6l-9 4h-8"/><path d="M12 14L1 21l11 7z"/></svg></button>
<button class="ib" aria-label="Right elevation"><svg viewBox="0 0 32 32"><path fill="#800000" d="M19 24h6l6 4H19z"/><path fill="#fff" stroke="#000080" stroke-width="2" d="M8 14h13v13H8zM13 17h3v4h-3z"/><path fill="url(#tiles)" stroke="#000080" stroke-width="2" d="M6 13l9-9 8 9z"/></svg></button>
<button class="ib" aria-label="Front elevation"><svg viewBox="0 0 32 32"><path fill="#fff" stroke="#000080" stroke-width="2" d="M5 14h24v13H5zM19 17h6v4h-6z"/><path fill="#800000" d="M8 16h6v11H8z"/><path fill="url(#tiles)" stroke="#000080" stroke-width="2" d="M4 13l6-9h14l6 9z"/></svg></button>
<button class="ib" aria-label="Left elevation"><svg viewBox="0 0 32 32"><path fill="#800000" d="M9 24l-7 4h9v-4z"/><path fill="#fff" stroke="#000080" stroke-width="2" d="M10 14h13v13H10zM15 17h3v4h-3z"/><path fill="url(#tiles)" stroke="#000080" stroke-width="2" d="M8 13l9-9 8 9z"/></svg></button>
<button class="ib" aria-label="Back elevation"><svg viewBox="0 0 32 32"><path fill="#fff" stroke="#000080" stroke-width="2" d="M5 14h24v13H5zM8 17h5v4H8zM20 17h5v4h-5z"/><path fill="url(#tiles)" stroke="#000080" stroke-width="2" d="M4 13l6-9h14l6 9z"/></svg></button>
<button class="ib" aria-label="Zoom extents"><svg viewBox="0 0 32 32"><path fill="#fff" stroke="#000" stroke-width="2" d="M4 4h8l-2 2 4 4-3 3-4-4-3 3zM30 4h-8l2 2-4 4 3 3 4-4 3 3zM4 28h8l-2-2 4-4-3-3-4 4-3-3zM30 28h-8l2-2-4-4 3-3 4 4 3-3z"/></svg></button>
<button class="ib" aria-label="Isometric"><svg viewBox="0 0 32 32"><path fill="#fff" stroke="#000080" stroke-width="2" d="M1 15L20 4l10 7-11 5 10 6-5 5z"/><path stroke="#000080" stroke-width="2" d="M11 10l8 5M11 20l6-4"/></svg></button>
<button class="ib on" aria-label="Plan view"><svg viewBox="0 0 32 32"><path fill="#999" d="M6 8h24v18H6z"/><path fill="#fff" stroke="#000080" stroke-width="2" d="M3 5h25v19H3z"/><path fill="none" stroke="#000080" stroke-width="2" d="M4 15h3M11 15h7M15 6v9M21 6v4M21 14v10"/></svg></button>
<button class="more" aria-label="Toolbar options"></button></div>
</footer>
</body>
</html>
```
FILE: styles.css
```css
* { box-sizing: border-box; }
html { height: 100%; }
body {
  margin: 0;
  min-height: 100%;
  display: flex;
  flex-direction: column;
  background: #525252;
  color: #000;
  font: 11px/16px "Open Sans", "Noto Sans", sans-serif;
}
button, input { font: inherit; color: inherit; margin: 0; padding: 0; border: 0; background: none; }
button { white-space: nowrap; flex: none; }
svg { display: block; shape-rendering: crispEdges; overflow: hidden; }
i { display: block; flex: none; }
.defs { position: absolute; width: 0; height: 0; }

.titlebar {
  height: 23px;
  display: flex;
  align-items: center;
  padding: 0 19px 0 3px;
  gap: 6px;
  background: linear-gradient(90deg, #f8f0f0 0, #faf0ee 20%, #faf3e2 34%, #fbf1e4 46%, #f8f0f0 58%, #f5f0f3 66%, #f9f1ef 74%, #f9f1ef 100%);
}
.titlebar h1 { margin: 0; flex: 1; font-size: 12px; font-weight: 400; }
.appicon { width: 15px; height: 16px; }
.wincontrols { display: flex; gap: 34px; padding-bottom: 2px; }
.wincontrols svg { width: 12px; height: 12px; shape-rendering: auto; }

.menubar { height: 23px; display: flex; align-items: center; color: #fff; padding: 0 5px 1px 2px; }
.menubar > button { padding: 0 8px 0 7px; }
.docicon { width: 18px; height: 16px; margin-right: 2px; }
.docctl { margin: 6px 0 0 auto; display: flex; gap: 6px; }
.docctl svg { width: 10px; height: 10px; }

.rows { display: flex; flex-direction: column; gap: 1px; padding-bottom: 1px; }
.row { display: flex; height: 45px; }
.bar {
  display: flex;
  align-items: center;
  padding-left: 3px;
  border-radius: 3px 4px 4px 0;
  background: linear-gradient(#cdd1d7 0, #c8ccd2 30%, #b2b7c0 60%, #969da8 100%);
}
.grip { width: 2px; height: 27px; margin: 0 4px 0 1px; background: repeating-linear-gradient(#333 0 2px, #e4e6ea 2px 4px); }
.ib { width: 44px; height: 41px; display: flex; align-items: center; justify-content: center; }
.ib svg { width: 32px; height: 32px; }
.tb { height: 41px; padding: 0 5px 0 4px; }
.tight .tb { padding: 0 4px; }
.tb:disabled, .vt:disabled { color: #8b8f95; }
.on {
  border: 1px solid #8f9aa6;
  border-color: #b0a48e #d8dadd #e8eaec #9aa4b0;
  background: linear-gradient(#ffdcae 0, #ffcf94 30%, #ffae50 33%, #ffb75e 60%, #ffe08a 85%, #ffe575 100%);
}
.more {
  position: relative;
  width: 19px;
  height: 45px;
  margin-left: 3px;
  border-radius: 0 4px 4px 0;
  background: linear-gradient(#a7acb6, #7e848e 50%, #525761);
}
.more::before { content: ""; position: absolute; left: 5px; top: 31px; width: 10px; height: 1px; background: #fff; }
.more::after { content: ""; position: absolute; left: 6px; top: 35px; border: 4px solid transparent; border-top: 5px solid #e4e6ea; border-bottom: 0; }

.middle { flex: 1; display: flex; min-height: 0; }
.left { flex: 1; min-width: 0; display: flex; flex-direction: column; }
.work { flex: 1; min-height: 0; display: flex; gap: 5px; }

.panel { width: 319px; display: flex; flex-direction: column; }
.panel h2 {
  margin: 0;
  height: 20px;
  padding: 0 6px 0 4px;
  display: flex;
  align-items: center;
  justify-content: space-between;
  background: #9b9d9b;
  color: #333;
  font-size: 11px;
  font-weight: 400;
}
.panel h2 span { display: flex; gap: 7px; }
.panel h2 svg { width: 9px; height: 11px; }
.pbody { flex: 1; background: #fff; border: solid #e2e2e2; border-width: 3px 3px 1px; min-height: 0; }
.ltools { height: 44px; display: flex; align-items: center; overflow: hidden; padding-left: 1px; background: linear-gradient(#cdd1d7, #b2b7c0 60%, #969da8); }
.sep { width: 2px; height: 26px; margin: 0 3px; background: linear-gradient(90deg, #555b66 50%, #fff 50%); }
table { width: 100%; border-collapse: collapse; table-layout: fixed; }
.c1 { width: 100px; } .c2 { width: 20px; } .c3 { width: 20px; } .c4 { width: 20px; } .c5 { width: 75px; }
th { height: 18px; padding: 1px 0 0 5px; background: #f4f4f4; border: solid #c8c8c8; border-width: 0 1px 1px 0; text-align: left; font-weight: 400; white-space: nowrap; }
td { height: 17px; padding: 0; line-height: 15px; font-size: 12px; white-space: nowrap; }
td:nth-child(6) { padding-left: 3px; }
.node { display: flex; align-items: center; line-height: 17px; font-size: 11px; }
.n1 { gap: 3px; padding-left: 4px; }
.n2 { gap: 2px; padding-left: 20px; }
.n2 span { flex: 1; padding-left: 2px; background: #0078d7; color: #fff; }
.dots { width: 10px; height: 1px; border-top: 1px dotted #888; }
.box { width: 10px; height: 10px; border: 1px solid #888; background: linear-gradient(90deg, #fff 2px, transparent 2px 6px, #fff 6px), linear-gradient(#fff 3px, #222 3px 4px, #fff 4px); }
.branch { width: 8px; height: 9px; margin-bottom: 8px; border: dotted #888; border-width: 0 0 1px 1px; }
.sel td:nth-child(n+2):nth-child(-n+6) { background: #0078d7; color: #fff; }
.eye { width: 16px; height: 10px; }
.mag { width: 14px; height: 14px; }
.sw { width: 17px; height: 13px; background: #000; }
.sw.red { background: #f00; }
.ptabs { height: 24px; display: flex; padding: 0 4px 3px; color: #fff; }
.ptabs button { width: 27px; padding: 2px 0 0 4px; text-align: left; }
.ptabs .cur { width: 24px; margin-right: 3px; color: #000; background: linear-gradient(#d0e0e4, #fff); border-radius: 0 0 4px 4px; }

.doc { flex: 1; min-width: 0; display: flex; flex-direction: column; border-left: 3px solid #b4b4b4; }
.dtabs { height: 20px; display: flex; align-items: center; padding-left: 4px; color: #fff; }
.dtabs > button { margin-right: 14px; }
.dtabs .cur { height: 18px; align-self: flex-end; display: flex; align-items: center; gap: 8px; margin-left: -4px; padding: 0 4px; color: #000; font-weight: 700; border-radius: 4px 4px 0 0; background: linear-gradient(#fff, #ccd1d8); }
.dtabs .cur svg { width: 9px; height: 9px; shape-rendering: auto; }
.scrolls { margin-left: auto; padding-right: 9px; }
.scrolls svg { width: 24px; height: 10px; }
.frame { flex: 1; min-height: 0; display: flex; flex-direction: column; border: solid #e8e8e8; border-width: 3px 6px 6px 1px; }
.view { flex: 1; min-height: 0; display: flex; border: solid #666; border-width: 3px 0 0 2px; }
.canvas { flex: 1; position: relative; background: #fff; overflow: hidden; }
.drawing { position: absolute; left: 445px; bottom: 0; width: 8px; height: 40px; }
.vscroll { width: 17px; background: #f0f0f0; padding: 17px 0 0 7px; }
.vscroll i { width: 2px; height: 17px; background: #888; }
.hscroll { height: 17px; background: #f0f0f0; padding: 7px 35px 0 0; }
.hscroll i { width: 17px; height: 2px; margin-left: auto; background: #888; }
.sheets { height: 18px; display: flex; align-items: center; padding-left: 1px; background: linear-gradient(#444 0, #606060 5px, #797979 100%); }
.nav { width: 14px; height: 13px; margin-right: 2px; background: #ededed; display: flex; align-items: center; justify-content: center; }
.nav svg { width: 10px; height: 10px; }
.sheet { height: 17px; align-self: flex-start; color: #000; }
.sheet.cur { width: 62px; margin-left: 4px; padding-right: 9px; font-weight: 700; background: linear-gradient(#fff, #dfe3e8); clip-path: polygon(0 0, 100% 0, 75% 100%, 0 100%); }
.sheet:not(.cur) { width: 63px; margin-left: -9px; padding-right: 7px; background: #c4cbd4; clip-path: polygon(14% 0, 100% 0, 76% 100%, 0 100%); }

.status { height: 19px; display: flex; align-items: center; color: #fff; background: linear-gradient(#3f434e 0, #3b3f49 8px, #2e2e2d 8px); padding: 2px 0 0 4px; }
.status p { margin: 0 auto 0 0; }
.status span { padding: 0 2px 0 4px; border-left: 1px solid #777; height: 14px; line-height: 14px; }
.status .far { margin-left: 6px; }

.side { width: 48px; flex: none; display: flex; flex-direction: column; }
.vbar { display: flex; flex-direction: column; align-items: center; padding: 4px 2px 0 0; border-left: 1px solid #888f9a; border-radius: 4px 0 0 0; background: linear-gradient(90deg, #cdd1d7 0, #c4c8cf 40%, #b0b6bf 65%, #929aa5 100%); }
.vgrip { height: 2px; width: 31px; margin: 0 0 7px; background: repeating-linear-gradient(90deg, #333 0 2px, #e4e6ea 2px 4px); }
.vgrip.near { margin-bottom: 5px; }
.vi { width: 42px; height: 42px; display: flex; align-items: center; justify-content: center; }
.vi svg { width: 32px; height: 32px; }
.vt { writing-mode: vertical-rl; text-orientation: sideways; width: 42px; line-height: 42px; }
.dwg { height: 72px; font-size: 12px; }
.glsl { height: 37px; font-size: 12px; }
.gl { height: 64px; line-height: 40px; background: linear-gradient(90deg, #ffdcae 0, #ffcf94 30%, #ffae50 33%, #ffb75e 60%, #ffe08a 85%, #ffe575 100%); }
.vsep { width: 28px; height: 2px; margin: 3px 0; background: linear-gradient(#555b66 50%, #fff 50%); }
.vmore { position: relative; width: 47px; height: 20px; margin: 2px -2px 0 0; background: linear-gradient(90deg, #525761, #7e848e 50%, #a7acb6); }
.vmore::before { content: ""; position: absolute; left: 31px; top: 5px; width: 1px; height: 10px; background: #fff; }
.vmore::after { content: ""; position: absolute; left: 37px; top: 6px; border: 4px solid transparent; border-left: 5px solid #e4e6ea; border-right: 0; }

footer.row { height: 46px; padding-bottom: 1px; }
footer .tb.on { margin-right: 1px; padding: 0 2px; }
.tb.step { display: flex; align-items: center; gap: 4px; padding: 0 10px 0 6px; }
.step svg { width: 32px; height: 32px; }
.ib.slim { width: 34px; }
.qty { width: 60px; height: 15px; margin: 0 3px 0 12px; padding-left: 3px; background: #fff; line-height: 15px; }
```
